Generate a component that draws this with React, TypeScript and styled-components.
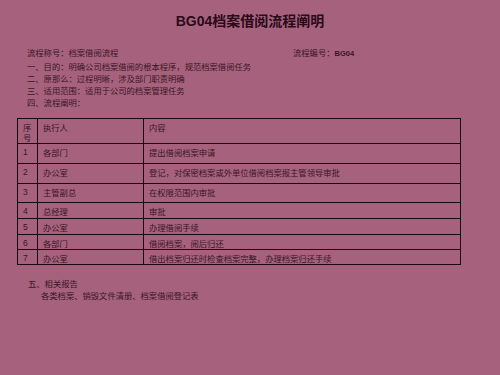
import React from "react";
import styled, { createGlobalStyle } from "styled-components";

const Global = createGlobalStyle`
  html, body { margin: 0; padding: 0; background: #a6627d; }
  #root { width: 500px; height: 375px; }
`;

const Page = styled.div`
  width: 500px;
  height: 375px;
  box-sizing: border-box;
  background: #a6627d;
  padding-top: 13px;
  color: #3a1424;
  font-family: "Noto Sans CJK SC", "Liberation Serif", serif;
  overflow: hidden;
`;

const Title = styled.h1`
  margin: 0;
  text-align: center;
  font-family: "Liberation Sans", "Noto Sans CJK SC", sans-serif;
  font-weight: bold;
  font-size: 14px;
  line-height: 16px;
  color: #2a0a18;
`;

const Info = styled.div`
  margin-top: 17px;
  padding-left: 27px;
  font-size: 8.3px;
  line-height: 12px;
`;

const Line = styled.div<{ $indent?: number }>`
  display: flex;
  white-space: nowrap;
  padding-left: ${(p) => p.$indent ?? 0}px;
`;

const LeftPart = styled.span`
  width: 266px;
`;

const Code = styled.span`
  font-family: "Liberation Sans", sans-serif;
  font-weight: bold;
  font-size: 7.5px;
`;

const Table = styled.table`
  margin: 10px 0 0 17px;
  width: 443px;
  border-collapse: collapse;
  table-layout: fixed;
  font-size: 8.3px;
  line-height: 10px;
`;

const Row = styled.tr<{ $h: number }>`
  height: ${(p) => p.$h}px;
`;

const Cell = styled.td<{ $num?: boolean }>`
  border: 1px solid #1a0810;
  vertical-align: top;
  padding: 3px 0 0 5px;
  white-space: nowrap;
  overflow: hidden;
  box-sizing: border-box;
  ${(p) =>
    p.$num
      ? `font-family: "Liberation Sans", sans-serif; font-size: 8.5px; padding-left: 5px;`
      : ""}
`;

const HeadCell = styled(Cell)`
  white-space: normal;
  line-height: 10px;
`;

const Section = styled.div`
  margin-top: 12px;
  padding-left: 28px;
  font-size: 8.3px;
  line-height: 12px;
`;

const rows: [string, string, string, number][] = [
  ["1", "各部门", "提出借阅档案申请", 20],
  ["2", "办公室", "登记，对保密档案或外单位借阅档案报主管领导审批", 20],
  ["3", "主管副总", "在权限范围内审批", 19],
  ["4", "总经理", "审批", 16],
  ["5", "办公室", "办理借阅手续", 16],
  ["6", "各部门", "借阅档案，阅后归还", 15],
  ["7", "办公室", "借出档案归还时检查档案完整，办理档案归还手续", 15],
];

export default function App() {
  return (
    <Page>
      <Global />
      <Title>BG04档案借阅流程阐明</Title>
      <Info>
        <Line>
          <LeftPart>流程称号：档案借阅流程</LeftPart>
          <span>
            流程编号：<Code>BG04</Code>
          </span>
        </Line>
        <Line>一、目的：明确公司档案借阅的根本程序，规范档案借阅任务</Line>
        <Line>二、原那么：过程明晰，涉及部门职责明确</Line>
        <Line>三、适用范围：适用于公司的档案管理任务</Line>
        <Line>四、流程阐明：</Line>
      </Info>
      <Table>
        <colgroup>
          <col style={{ width: 20 }} />
          <col style={{ width: 106 }} />
          <col style={{ width: 317 }} />
        </colgroup>
        <tbody>
          <Row $h={25}>
            <HeadCell>序号</HeadCell>
            <HeadCell>执行人</HeadCell>
            <HeadCell>内容</HeadCell>
          </Row>
          {rows.map(([n, who, what, h]) => (
            <Row key={n} $h={h}>
              <Cell $num>{n}</Cell>
              <Cell>{who}</Cell>
              <Cell>{what}</Cell>
            </Row>
          ))}
        </tbody>
      </Table>
      <Section>
        <Line>五、相关报告</Line>
        <Line $indent={13}>各类档案、销毁文件清册、档案借阅登记表</Line>
      </Section>
    </Page>
  );
}
